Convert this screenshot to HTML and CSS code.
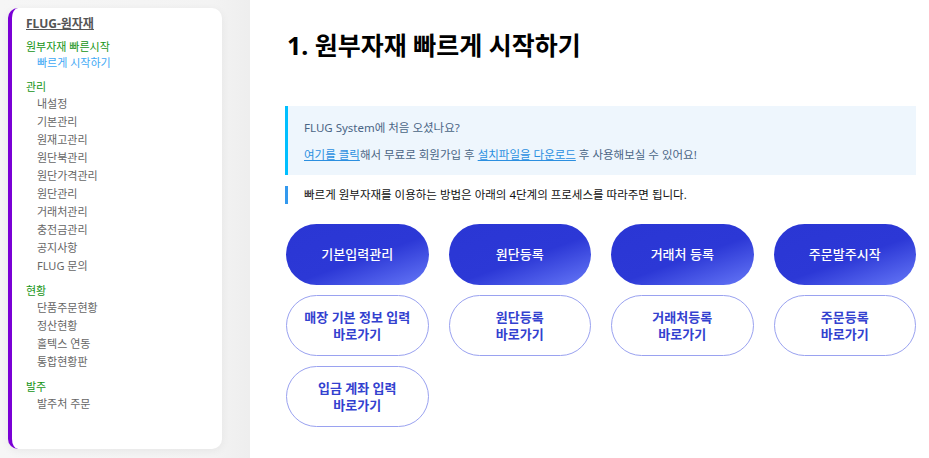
FILE: index.html
```html
<!DOCTYPE html>
<html lang="ko">
<head>
<meta charset="utf-8">
<title>FLUG-원자재</title>
<link rel="stylesheet" href="styles.css">
</head>
<body>
<div class="page">
  <aside class="side">
    <nav class="card">
      <div class="brand">FLUG-원자재</div>
      <div class="group">
        <div class="ghead">원부자재 빠른시작</div>
        <div class="item active">빠르게 시작하기</div>
      </div>
      <div class="group">
        <div class="ghead">관리</div>
        <div class="item">내설정</div>
        <div class="item">기본관리</div>
        <div class="item">원재고관리</div>
        <div class="item">원단북관리</div>
        <div class="item">원단가격관리</div>
        <div class="item">원단관리</div>
        <div class="item">거래처관리</div>
        <div class="item">충전금관리</div>
        <div class="item">공지사항</div>
        <div class="item">FLUG 문의</div>
      </div>
      <div class="group">
        <div class="ghead">현황</div>
        <div class="item">단품주문현황</div>
        <div class="item">정산현황</div>
        <div class="item">홀텍스 연동</div>
        <div class="item">통합현황판</div>
      </div>
      <div class="group">
        <div class="ghead">발주</div>
        <div class="item">발주처 주문</div>
      </div>
    </nav>
  </aside>
  <main class="main">
    <h1 class="title">1. 원부자재 빠르게 시작하기</h1>
    <div class="info">
      <p class="info-line">FLUG System에 처음 오셨나요?</p>
      <p class="info-line"><a class="lnk" href="#">여기를 클릭</a>해서 무료로 회원가입 후 <a class="lnk" href="#">설치파일을 다운로드</a> 후 사용해보실 수 있어요!</p>
    </div>
    <p class="note">빠르게 원부자재를 이용하는 방법은 아래의 4단계의 프로세스를 따라주면 됩니다.</p>
    <div class="grid">
      <div class="btn solid">기본입력관리</div>
      <div class="btn solid">원단등록</div>
      <div class="btn solid">거래처 등록</div>
      <div class="btn solid">주문발주시작</div>
      <div class="btn outline">매장 기본 정보 입력<br>바로가기</div>
      <div class="btn outline">원단등록<br>바로가기</div>
      <div class="btn outline">거래처등록<br>바로가기</div>
      <div class="btn outline">주문등록<br>바로가기</div>
      <div class="btn outline">입금 계좌 입력<br>바로가기</div>
    </div>
  </main>
</div>
</body>
</html>
```

FILE: styles.css
```css
* { box-sizing: border-box; }
html, body { margin: 0; padding: 0; }
body {
  font-family: "Noto Sans", "Noto Sans CJK KR", sans-serif;
  background: #fff;
  width: 929px;
  height: 458px;
  overflow: hidden;
}
.page {
  display: flex;
  height: 458px;
}
.side {
  width: 250px;
  flex: none;
  background: linear-gradient(90deg, #f6f6f6 0%, #f3f3f3 85%, #eeeeee 100%);
  padding: 8px 28px 9px 8px;
}
.card {
  height: 100%;
  background: #fff;
  border-left: 4px solid #7a00d6;
  border-radius: 10px;
  box-shadow: 0 2px 8px rgba(0,0,0,0.06);
  padding: 8px 0 0 14px;
}
.brand {
  font-size: 12px;
  font-weight: 700;
  color: #555;
  text-decoration: underline;
  line-height: 16px;
  margin-bottom: 7px;
}
.group { margin-bottom: 8px; }
.ghead {
  font-size: 11px;
  color: #149414;
  line-height: 16px;
}
.item {
  font-size: 11px;
  color: #666;
  line-height: 18px;
  padding-left: 11px;
}
.item.active { color: #3fa9f5; line-height: 16px; }
.main {
  flex: 1;
  padding: 28px 13px 0 36px;
}
.title {
  margin: 0 0 44px 1px;
  font-size: 25px;
  font-weight: 700;
  color: #000;
  line-height: 34px;
}
.info {
  background: #eef6fd;
  border-left: 3px solid #00bfff;
  padding: 8px 16px 7px 16px;
  margin-left: -1px;
}
.info-line {
  margin: 0;
  font-size: 11.5px;
  line-height: 27px;
  color: #4a6585;
}
.lnk { color: #2b8fe0; text-decoration: underline; }
.note {
  margin: 11px 0 0 -1px;
  border-left: 3px solid #3399ee;
  padding-left: 16px;
  font-size: 11.5px;
  line-height: 18px;
  color: #111;
}
.grid {
  margin-top: 20px;
  display: grid;
  grid-template-columns: repeat(4, 1fr);
  column-gap: 20px;
  row-gap: 10px;
}
.btn {
  height: 61px;
  border-radius: 31px;
  display: flex;
  align-items: center;
  justify-content: center;
  text-align: center;
  font-size: 13px;
  line-height: 17px;
}
.solid {
  background: linear-gradient(160deg, #2a36d4 0%, #2c38d6 55%, #6678f7 100%);
  color: #fff;
  font-weight: 500;
}
.outline {
  border: 1px solid #9aa2f0;
  color: #3341cf;
  font-weight: 700;
}
```
